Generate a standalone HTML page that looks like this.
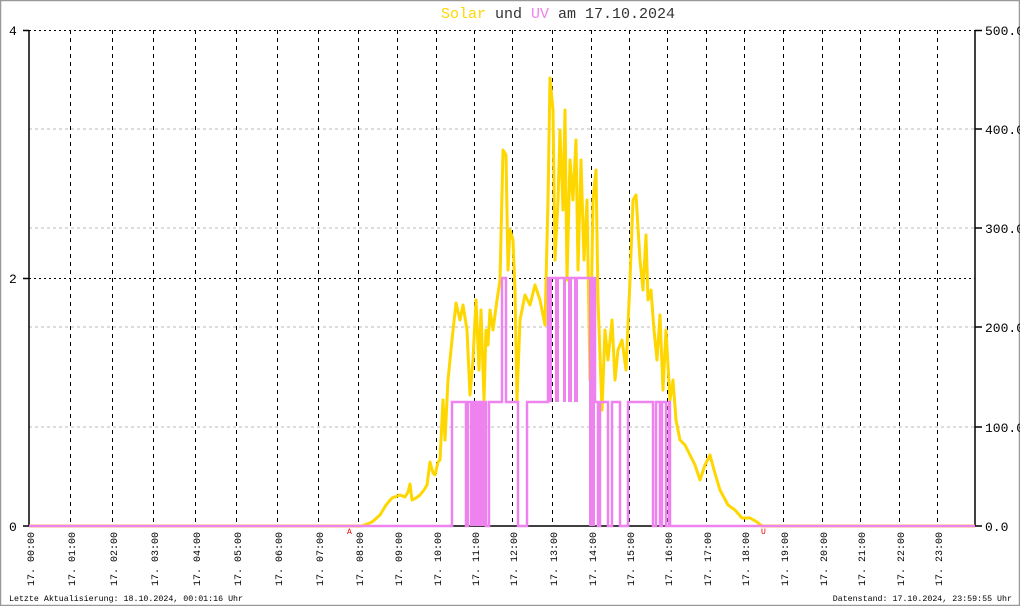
<!DOCTYPE html>
<html><head><meta charset="utf-8"><style>
html,body{margin:0;padding:0;background:#fff}
svg{display:block}
text{font-family:"Liberation Mono","DejaVu Sans Mono",monospace}
</style></head><body>
<svg width="1020" height="606" viewBox="0 0 1020 606" xmlns="http://www.w3.org/2000/svg">
<rect x="0.5" y="0.5" width="1019" height="605" fill="#fff" stroke="#999" stroke-width="1.5"/>
<text x="558" y="18" font-size="15" text-anchor="middle" fill="#333"><tspan fill="#FFD700">Solar</tspan> und <tspan fill="#EE82EE">UV</tspan> am 17.10.2024</text>
<g stroke="#bbb" stroke-dasharray="3 3" stroke-width="1">
<line x1="29" y1="129" x2="975" y2="129"/><line x1="29" y1="228" x2="975" y2="228"/>
<line x1="29" y1="327" x2="975" y2="327"/><line x1="29" y1="427" x2="975" y2="427"/>
</g>
<g stroke="#000" stroke-dasharray="2 3" stroke-width="1">
<line x1="29" y1="30.5" x2="975" y2="30.5"/><line x1="29" y1="278.5" x2="975" y2="278.5"/>
</g>
<g stroke="#000" stroke-dasharray="4 4" stroke-width="1" id="vg"></g>
<g stroke="#000" stroke-width="1.5">
<line x1="29" y1="30" x2="29" y2="526"/><line x1="975" y1="30" x2="975" y2="526"/>
<line x1="23" y1="30.5" x2="29" y2="30.5"/><line x1="23" y1="278.5" x2="29" y2="278.5"/><line x1="23" y1="526" x2="29" y2="526"/>
<line x1="975" y1="30.5" x2="982" y2="30.5"/><line x1="975" y1="129" x2="982" y2="129"/><line x1="975" y1="228" x2="982" y2="228"/><line x1="975" y1="327" x2="982" y2="327"/><line x1="975" y1="427" x2="982" y2="427"/><line x1="975" y1="526" x2="982" y2="526"/>
<line x1="29" y1="526" x2="975" y2="526"/>
</g>
<g font-size="13" fill="#000">
<text x="9" y="35">4</text><text x="9" y="283">2</text><text x="9" y="531">0</text>
<text x="985" y="35">500.0</text><text x="985" y="134">400.0</text><text x="985" y="233">300.0</text><text x="985" y="332">200.0</text><text x="985" y="432">100.0</text><text x="985" y="531">0.0</text>
</g>
<polyline fill="none" stroke="#FFD700" stroke-width="3" stroke-linejoin="round" points="29,526 362,526 372,522 380,515 386,505 392,498 400,495 405,497 408,492 410,484 412,500 416,498 420,495 424,490 427,485 430,462 433,473 435,475 438,462 440,460 443,400 445,440 448,380 452,340 456,303 460,320 463,305 467,330 470,395 473,360 476,300 479,370 481,310 484,400 486,330 488,345 490,310 493,330 497,300 500,280 503,150 506,155 508,270 510,230 513,240 515,290 517,400 520,320 525,295 530,305 535,285 540,300 545,325 548,200 550,78 553,110 555,260 558,200 560,130 563,210 565,110 567,280 570,160 573,200 576,140 578,270 581,160 584,260 587,200 590,380 593,200 596,170 598,300 602,410 605,330 608,360 612,320 615,380 618,350 622,340 626,370 630,280 633,200 636,195 640,260 643,290 646,235 648,300 651,290 654,330 657,360 660,315 663,390 666,330 670,400 673,380 676,420 680,440 685,445 690,455 695,465 700,480 705,465 710,455 714,470 720,490 728,505 735,510 742,518 750,518 757,522 762,526 975,526"/>
<g fill="#EE82EE">
<rect x="470" y="402" width="15" height="124"/>
<rect x="555" y="278" width="4" height="124"/><rect x="563" y="278" width="3" height="124"/><rect x="568" y="278" width="4" height="124"/><rect x="574" y="278" width="4" height="124"/>
<rect x="589" y="278" width="6" height="248"/>
<rect x="548" y="278" width="4" height="124"/>
</g>
<polyline fill="none" stroke="#EE82EE" stroke-width="2.5" points="29,526 452,526 452,402 466,402 466,526 468,526 468,402 486,402 486,526 489,526 489,402 502,402 502,278 506,278 506,402 518,402 518,526 527,526 527,402 548,402 548,278 595,278 595,402 598,402 598,526 600,526 600,402 608,402 608,526 612,526 612,402 620,402 620,526 628,526 628,402 653,402 653,526 656,526 656,402 660,402 660,526 662,526 662,402 666,402 666,526 669,526 669,402 670,402 670,526 975,526"/>
<text x="347" y="534" font-size="8" fill="#e00">A</text>
<text x="761" y="534" font-size="8" fill="#e00">U</text>
<g id="xl" font-size="10" fill="#000"></g>
<text x="9" y="601" font-size="8.3" fill="#000">Letzte Aktualisierung: 18.10.2024, 00:01:16 Uhr</text>
<text x="1012" y="601" font-size="8.3" fill="#000" text-anchor="end">Datenstand: 17.10.2024, 23:59:55 Uhr</text>
</svg>
<script>
var ns="http://www.w3.org/2000/svg",vg=document.getElementById("vg"),xl=document.getElementById("xl");
var X=[29,70,112,153,195,236,277,318,358,397,436,474,512,552,591,629,667,706,744,783,822,860,899,937];
for(var k=0;k<24;k++){var x=X[k];
if(k>0){var l=document.createElementNS(ns,"line");l.setAttribute("x1",x+.5);l.setAttribute("x2",x+.5);l.setAttribute("y1",30);l.setAttribute("y2",526);vg.appendChild(l);}
var t=document.createElementNS(ns,"text");t.setAttribute("transform","translate("+(x+5)+",586) rotate(-90)");t.textContent="17. "+(k<10?"0":"")+k+":00";xl.appendChild(t);}
</script>
</body></html>
